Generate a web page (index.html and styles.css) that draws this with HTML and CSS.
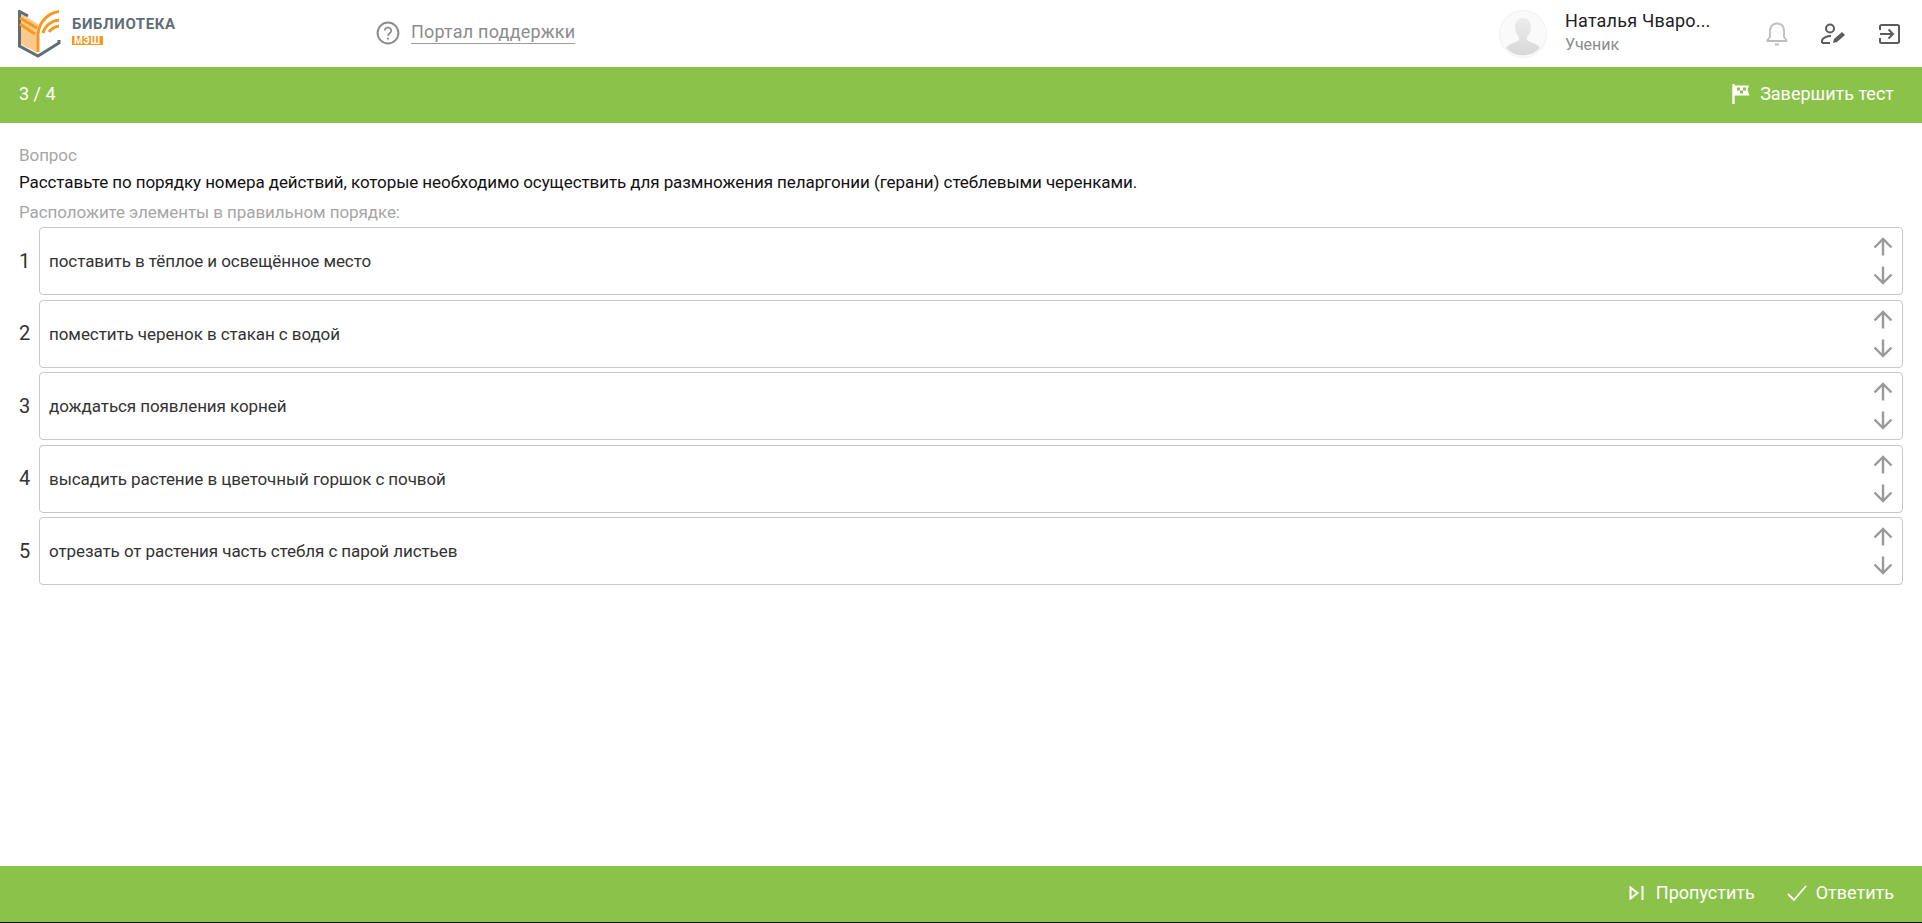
FILE: index.html
```html
<!DOCTYPE html>
<html lang="ru">
<head>
<meta charset="utf-8">
<title>Библиотека МЭШ</title>
<link rel="stylesheet" href="styles.css">
</head>
<body>
<div class="page">
<header class="top">
  <div class="logo">
    <svg class="logo-icon" width="44" height="48" viewBox="0 0 44 48">
      <path d="M2 3 L20 14 V43 L2 34 Z" fill="#fcc98c"/>
      <path d="M10 6 L1.500 1.500 V36 L20 46 L41 33 V30" fill="none" stroke="#5f6e76" stroke-width="3"/>
      <path d="M2 8 L19 18 M2 14 L17 24" fill="none" stroke="#f39a1f" stroke-width="3"/>
      <path d="M20 42 V24 C21 12 30 3 41 1.500 M25 23 C27 16 33 11 41 10 M31 22 C33 19 36 17 41 16" fill="none" stroke="#f39a1f" stroke-width="3"/>
    </svg>
    <div class="logo-text">
      <div class="logo-title">БИБЛИОТЕКА</div>
      <div class="logo-badge">МЭШ</div>
    </div>
  </div>
  <a class="support">
    <svg width="24" height="24" viewBox="0 0 24 24"><circle cx="12" cy="12" r="10.400" fill="none" stroke="#8c8c8c" stroke-width="2"/><path d="M8.800 9.600a3.200 3.200 0 1 1 5 2.600c-1.100.8-1.800 1.300-1.800 2.600" fill="none" stroke="#8c8c8c" stroke-width="1.800"/><circle cx="12" cy="17.600" r="1.100" fill="#8c8c8c"/></svg>
    <span class="support-link">Портал поддержки</span>
  </a>
  <div class="user">
    <svg class="avatar" width="48" height="48" viewBox="0 0 48 48">
      <defs><linearGradient id="ag" x1="0" y1="0" x2="0" y2="1"><stop offset="0" stop-color="#ececec"/><stop offset="1" stop-color="#d8d8d8"/></linearGradient></defs>
      <circle cx="24" cy="24" r="23.500" fill="#fafafa" stroke="#f0f0f0"/>
      <path d="M24 8c5 0 8 4 8 9 0 4-2 8-4 10v3c3 3 10 3 13 8a23.500 23.500 0 0 1-34 0c3-5 10-5 13-8v-3c-2-2-4-6-4-10 0-5 3-9 8-9z" fill="url(#ag)"/>
    </svg>
    <div class="user-info">
      <div class="user-name">Наталья Чваро...</div>
      <div class="user-role">Ученик</div>
    </div>
    <div class="user-actions">
      <svg width="24" height="26" viewBox="0 0 24 26"><path d="M12 2.500c-4.500 0-7 3-7 7.500v6l-2.500 3v1h19v-1L19 16v-6c0-4.500-2.500-7.500-7-7.500z" fill="none" stroke="#bdbdbd" stroke-width="1.800"/><path d="M10 23.500h4" stroke="#bdbdbd" stroke-width="2"/></svg>
      <svg width="26" height="24" viewBox="0 0 26 24"><circle cx="10" cy="6.500" r="4" fill="none" stroke="#5c5c5c" stroke-width="2"/><path d="M2 21v-2c0-3 5-5 9-5" fill="none" stroke="#5c5c5c" stroke-width="2"/><path d="M2 21h8" stroke="#5c5c5c" stroke-width="2"/><path d="M13 21l1-4 8-7 3 3-8 7z" fill="#5c5c5c"/></svg>
      <svg width="24" height="24" viewBox="0 0 24 24"><path d="M3 8V4.500A1.500 1.500 0 0 1 4.500 3h16A1.500 1.500 0 0 1 22 4.500v15a1.500 1.500 0 0 1-1.500 1.500h-16A1.500 1.500 0 0 1 3 19.500V16" fill="none" stroke="#5c5c5c" stroke-width="2"/><path d="M3 12h13M11.500 7.500L16 12l-4.500 4.500" fill="none" stroke="#5c5c5c" stroke-width="2"/></svg>
    </div>
  </div>
</header>
<div class="bar bar-top">
  <span class="counter">3 / 4</span>
  <span class="action action-finish">
    <svg width="18" height="20" viewBox="0 0 18 20"><path d="M1.500 0v20" stroke="#fff" stroke-width="2.400"/><path d="M2 1.500h15l-1.500 4.500 2 5.500H2z" fill="#fff"/><path d="M5 3.500h3v3H5zM11 3.500h3v3h-3zM8 6.500h3v3H8z" fill="#8bc34a"/></svg>
    Завершить тест
  </span>
</div>
<main class="content">
  <div class="label">Вопрос</div>
  <div class="question">Расставьте по порядку номера действий, которые необходимо осуществить для размножения пеларгонии (герани) стеблевыми черенками.</div>
  <div class="label hint">Расположите элементы в правильном порядке:</div>
  <ol class="items">
    <li class="row"><span class="num">1</span><div class="box"><span>поставить в тёплое и освещённое место</span><div class="arrows"><svg width="24" height="24" viewBox="0 0 24 24"><path d="M12 20.500V4M3.500 12.500L12 4l8.500 8.500"/></svg><svg width="24" height="24" viewBox="0 0 24 24"><path d="M12 3.500V20M3.500 11.500L12 20l8.500-8.500"/></svg></div></div></li>
    <li class="row"><span class="num">2</span><div class="box"><span>поместить черенок в стакан с водой</span><div class="arrows"><svg width="24" height="24" viewBox="0 0 24 24"><path d="M12 20.500V4M3.500 12.500L12 4l8.500 8.500"/></svg><svg width="24" height="24" viewBox="0 0 24 24"><path d="M12 3.500V20M3.500 11.500L12 20l8.500-8.500"/></svg></div></div></li>
    <li class="row"><span class="num">3</span><div class="box"><span>дождаться появления корней</span><div class="arrows"><svg width="24" height="24" viewBox="0 0 24 24"><path d="M12 20.500V4M3.500 12.500L12 4l8.500 8.500"/></svg><svg width="24" height="24" viewBox="0 0 24 24"><path d="M12 3.500V20M3.500 11.500L12 20l8.500-8.500"/></svg></div></div></li>
    <li class="row"><span class="num">4</span><div class="box"><span>высадить растение в цветочный горшок с почвой</span><div class="arrows"><svg width="24" height="24" viewBox="0 0 24 24"><path d="M12 20.500V4M3.500 12.500L12 4l8.500 8.500"/></svg><svg width="24" height="24" viewBox="0 0 24 24"><path d="M12 3.500V20M3.500 11.500L12 20l8.500-8.500"/></svg></div></div></li>
    <li class="row"><span class="num">5</span><div class="box"><span>отрезать от растения часть стебля с парой листьев</span><div class="arrows"><svg width="24" height="24" viewBox="0 0 24 24"><path d="M12 20.500V4M3.500 12.500L12 4l8.500 8.500"/></svg><svg width="24" height="24" viewBox="0 0 24 24"><path d="M12 3.500V20M3.500 11.500L12 20l8.500-8.500"/></svg></div></div></li>
  </ol>
</main>
<footer class="bar bar-bottom">
  <span class="action action-skip">
    <svg width="15" height="14" viewBox="0 0 15 14"><path d="M1.500 1.500v11L8.500 7z" fill="none" stroke="#fff" stroke-width="2"/><path d="M13.500 0v14" stroke="#fff" stroke-width="2"/></svg>
    Пропустить
  </span>
  <span class="action action-answer">
    <svg width="20" height="16" viewBox="0 0 20 16"><path d="M1 9l6 6L19 1" fill="none" stroke="#fff" stroke-width="1.800"/></svg>
    Ответить
  </span>
</footer>
</div>
</body>
</html>
```

FILE: styles.css
```css
* { box-sizing: border-box; }
html, body { margin: 0; height: 100%; }
body { font-family: Roboto, "Liberation Sans", sans-serif; color: #212121; background: #fff; overflow: hidden; }
.page { height: 923px; display: flex; flex-direction: column; border-bottom: 1px solid #111; }
.top { height: 67px; flex: none; display: flex; align-items: center; padding: 0 21px 0 18px; }
.logo { display: flex; align-items: center; gap: 10px; width: 358px; flex: none; }
.logo-text { display: flex; flex-direction: column; align-items: flex-start; margin-top: -7px; }
.logo-title { font-size: 15px; font-weight: 700; color: #5f6e76; line-height: 16px; letter-spacing: .6px; }
.logo-badge { background: #f39a1f; color: #fff; font-size: 10px; font-weight: 700; line-height: 9px; padding: 0 2px; letter-spacing: .6px; margin-top: 4px; }
.support { display: flex; align-items: center; gap: 11px; color: #8c8c8c; font-size: 18px; margin-top: -2px; }
.support-link { border-bottom: 1px solid #9e9e9e; line-height: 22px; letter-spacing: .2px; }
.user { margin-left: auto; display: flex; align-items: center; }
.avatar { flex: none; }
.user-info { width: 200px; margin-left: 18px; margin-top: -1px; }
.user-name { font-size: 18px; line-height: 22px; letter-spacing: .2px; }
.user-role { font-size: 16px; line-height: 22px; color: #8c8c8c; margin-top: 2px; }
.user-actions { display: flex; align-items: center; gap: 31px; }
.bar { height: 56px; flex: none; background: #8bc34a; color: #fff; display: flex; align-items: center; padding: 0 28px 3px 19px; font-size: 18px; }
.bar-top { justify-content: space-between; }
.bar-bottom { justify-content: flex-end; gap: 32px; margin-top: auto; }
.action { display: flex; align-items: center; }
.action-finish { gap: 10px; }
.action-skip { gap: 12px; }
.action-answer { gap: 9px; }
.content { padding: 21px 19px 0; }
.label { font-size: 17px; line-height: 22px; color: #a6a6a6; letter-spacing: -.08px; }
.question { font-size: 17px; line-height: 22px; color: #111; margin-top: 5px; letter-spacing: -.08px; }
.hint { margin-top: 8px; }
.items { list-style: none; margin: 4px 0 0; padding: 0; display: flex; flex-direction: column; gap: 4.600px; }
.row { display: flex; align-items: center; height: 68px; }
.num { width: 20px; flex: none; font-size: 20px; line-height: 24px; margin-top: -1px; color: #333; }
.box { flex: 1; height: 68px; border: 1px solid #c8c8c8; border-radius: 4px; display: flex; justify-content: space-between; padding: 0 7px 0 9px; font-size: 17px; letter-spacing: -.08px; color: #333; }
.box > span { line-height: 66px; }
.arrows { display: flex; flex-direction: column; justify-content: center; gap: 4px; }
.arrows svg { display: block; }
.arrows path { fill: none; stroke: #9a9a9a; stroke-width: 2.400; }
```
